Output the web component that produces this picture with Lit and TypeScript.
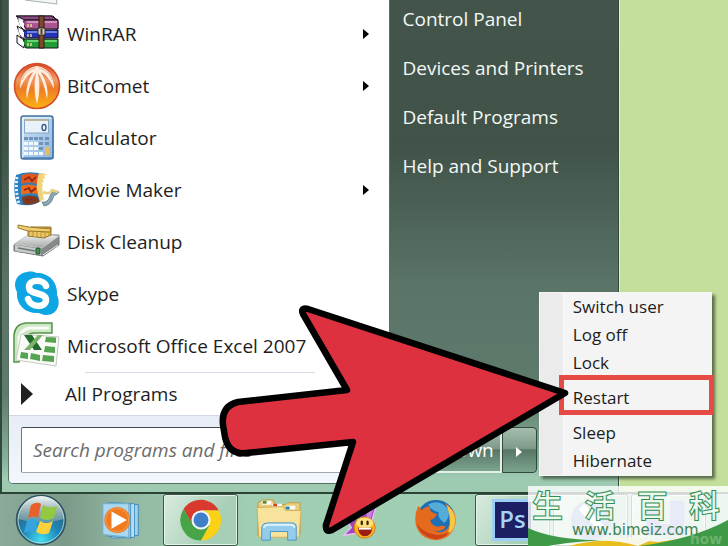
import { LitElement, html, css, svg, nothing, TemplateResult } from "lit";
import { customElement } from "lit/decorators.js";

type Icon = TemplateResult;

const frame = (body: unknown): Icon =>
  html`<svg class="icon" viewBox="0 0 48 48" aria-hidden="true">${body}</svg>`;

const paperIcon = frame(svg`<path d="M10 10H40L44 46L12 42Z" fill="#f4f6f6" stroke="#a3b0b0"/>`);

const winrarIcon = frame(svg`
  <g stroke="#1b1420" stroke-width="1">
    <path d="M4 6H40L45 11V19L40 21H12L8 17Z" fill="#e9e4ec"/>
    <path d="M3 6L38 6L45 10H12Z" fill="#8b4a80"/>
    <path d="M11 10H45V19H13Q9 15 11 10Z" fill="#a9558f"/>
    <path d="M4 16L11 20V29L8 27Z" fill="#e9eaf4"/>
    <path d="M11 20H45V28H13Q9 24 11 20Z" fill="#2434b4"/>
    <path d="M4 25L11 30V38L4 33Z" fill="#eef2ee"/>
    <path d="M11 29H45V38H13Q9 34 11 29Z" fill="#1f9c35"/>
  </g>
  <path d="M5 9L11 13V18L7 16ZM5 19L11 22V27L7 25ZM5 28L11 32V36L7 34Z" fill="#fff"/>
  <path d="M14 12H44" stroke="#d592bd" stroke-width="2"/>
  <path d="M14 22H44" stroke="#6d83e8" stroke-width="2"/>
  <path d="M14 31H44" stroke="#68d770" stroke-width="2"/>
  <path d="M15 14v3M18 14v3M15 24v3M18 24v3M15 33v3M18 33v3" stroke="#f0dfa0" stroke-width="1.4"/>
  <path d="M26 6H31V38H26Z" fill="#7a4a2a" stroke="#2e1a10"/>
  <rect x="25" y="18" width="7" height="7" rx="1" fill="#d9d3c4" stroke="#2a2420"/>
  <path d="M28.500 19V24" stroke="#463c34" stroke-width="2"/>`);

const bitcometIcon = frame(svg`
  <defs><linearGradient id="bc" x1="0" y1="0" x2="0" y2="1">
    <stop offset="0" stop-color="#d9431f"/><stop offset=".35" stop-color="#f09a6a"/><stop offset=".55" stop-color="#ee7a25"/><stop offset="1" stop-color="#fbb413"/>
  </linearGradient></defs>
  <circle cx="24" cy="24" r="22.5" fill="url(#bc)" stroke="#d3502a" stroke-width="1.6"/>
  <path d="M24 4C12 6 7 15 7 27C10 20 13 14 20 10C15 19 12 28 14 37C16 27 18 18 23 11C21 21 21 31 24 42C27 31 27 21 25 11C30 18 32 27 34 37C36 28 33 19 28 10C35 14 38 20 41 27C41 15 36 6 24 4Z" fill="#fff6ea" opacity=".93"/>
  <path d="M22 6C15 8 12 11 9 18M26 6C33 8 36 11 39 18" stroke="#f3b28a" fill="none"/>`);

const calculatorIcon = frame(svg`
  <defs><linearGradient id="ca" x1="0" y1="0" x2="1" y2="1">
    <stop offset="0" stop-color="#cfe4f7"/><stop offset="1" stop-color="#8fb6de"/>
  </linearGradient></defs>
  <rect x="8" y="2" width="32" height="43" rx="2.5" fill="url(#ca)" stroke="#44729f" stroke-width="1.4"/>
  <path d="M10 44V4H38" stroke="#eef7ff" stroke-width="1.2" fill="none"/>
  <path d="M40 5V44H10" stroke="#477db5" stroke-width="1.4" fill="none"/>
  <rect x="11.500" y="6" width="24" height="13" fill="#e9f2f9" stroke="#85a7c5"/>
  <path d="M11 6H36" stroke="#c3a160"/>
  <ellipse cx="31" cy="13.500" rx="2" ry="3" fill="none" stroke="#355b8a" stroke-width="1.4"/>
  <g fill="#6f94b8">
    <path d="M11 23h4v3h-4zM16 23h4v3h-4zM21 23h4v3h-4zM26 23h4v3h-4zM32 23h4v3h-4z"/>
    <path d="M26 28h4v3h-4zM32 28h4v3h-4zM26 33h4v3h-4z"/>
  </g>
  <g fill="#f4f9fd">
    <path d="M11 28h4v3h-4zM16 28h4v3h-4zM21 28h4v3h-4zM11 33h4v3h-4zM16 33h4v3h-4zM21 33h4v3h-4zM11 38h4v3h-4zM16 38h4v3h-4zM21 38h4v3h-4zM26 38h4v3h-4z"/>
  </g>
  <path d="M32 33h4v8h-4z" fill="#e8bb62"/>`);

const movieIcon = frame(svg`
  <path d="M3 9Q14 4 31 8Q24 18 29 34Q20 42 4 38Q-1 24 3 9Z" fill="#2c7fbf"/>
  <path d="M4 11Q2 24 6 38" stroke="#dff0fb" stroke-width="3" stroke-dasharray="2.200 1.800" fill="none"/>
  <path d="M9 9Q17 6 26 9L24 18Q16 15 8 18Z" fill="#e4581e"/>
  <path d="M8 20Q16 17 24 20L24 28Q16 26 8 29Z" fill="#ec6a1c"/>
  <path d="M9 31Q17 28 25 31L26 36Q17 40 10 38Z" fill="#7c3b22"/>
  <path d="M11 14L16 11L19 15L23 11M11 24L16 22L18 26L23 22M13 34L20 33" stroke="#8f2412" stroke-width="1.700" fill="none"/>
  <path d="M26 7L34 8Q27 18 31 33L27 36Q21 20 26 7Z" fill="#f3d27a"/>
  <path d="M33 9Q27 20 33 34" stroke="#fff" stroke-width="2" stroke-dasharray="2.200 1.800" fill="none"/>
  <path d="M29 36Q35 37 37 30Q39 23 46 26L43 29Q41 28 40 32Q38 39 31 40Z" fill="#8ba7b4" stroke="#52717e" stroke-width=".7"/>
  <path d="M30 26Q37 29 39 24L45 26" stroke="#e9cf80" stroke-width="2.500" fill="none"/>`);

const diskIcon = frame(svg`
  <defs><linearGradient id="dk" x1="0" y1="0" x2="0" y2="1">
    <stop offset="0" stop-color="#f4f4f4"/><stop offset="1" stop-color="#a2a5a6"/>
  </linearGradient></defs>
  <path d="M1 27L16 17H46V27L30 38L1 33Z" fill="#85898a" stroke="#717576"/>
  <path d="M1 26L17 16L46 18L29 30Z" fill="url(#dk)" stroke="#c5c7c8"/>
  <path d="M2 27L28 31V37L2 33Z" fill="#c7caca"/>
  <path d="M5 30L22 33" stroke="#6f7374" stroke-width="1.500"/>
  <rect x="23" y="30" width="4" height="6" rx="1" fill="#399648" stroke="#22482a"/>
  <path d="M30 37L45 27" stroke="#eee" stroke-width="1"/>
  <path d="M15 13L18 9H38V17L31 20L15 18Z" fill="#d7ad43" stroke="#95742a"/>
  <path d="M5 7L16 9L38 11L37 14L15 13L5 10Z" fill="#efce70" stroke="#9d7a2c"/>
  <path d="M18 14V18M22 14V19M26 14V19M30 15V19M34 15V18" stroke="#f5dda0"/>`);

const skypeIcon = frame(svg`
  <path d="M14 2C19 1 21 2 24 3C36 3 45 12 44 25C48 33 45 45 33 45C29 45 28 43 24 43C11 43 3 34 4 22C-1 13 4 3 14 2Z" fill="#0ea5e3"/>
  <path d="M33 16C31 9 16 9 16 17C16 26 33 21 33 30C33 38 18 38 15 29" fill="none" stroke="#fff" stroke-width="6.500" stroke-linecap="round"/>`);

const excelIcon = frame(svg`
  <path d="M1 40V13Q2 2 13 1H39V11H20Q12 12 11 21L6 40Z" fill="#cde6c3" stroke="#539548" stroke-width="1.500"/>
  <path d="M6 37V16Q8 7 17 6H36" stroke="#f7fcf5" stroke-width="3" fill="none"/>
  <path d="M8 12L46 15L43 44L3 38Z" fill="#fafbf8" stroke="#c3ccbf"/>
  <path d="M33 15L43 15.500V21L32 20ZM32 24L42 25V31L31 30ZM30 33L41 34V40L29 39ZM18 31L27 33V39L17 37ZM8 30L15 31V37L7 36Z" fill="#55a550"/>
  <path d="M11 13H19L29 28H21Z" fill="#226c2d"/>
  <path d="M25 13H30L17 28H11Z" fill="#7eb26c"/>`);

const orbIcon = html`<svg class="orb" viewBox="0 0 52 52" aria-hidden="true">
  <defs>
    <radialGradient id="or" cx=".5" cy=".9" r=".75">
      <stop offset="0" stop-color="#43dcef"/><stop offset=".5" stop-color="#1c87b8"/><stop offset="1" stop-color="#2d5f78"/>
    </radialGradient>
    <linearGradient id="gl" x1="0" y1="0" x2="0" y2="1">
      <stop offset="0" stop-color="#f5faf7"/><stop offset="1" stop-color="#8fa8a6" stop-opacity=".55"/>
    </linearGradient>
  </defs>
  <circle cx="26" cy="26" r="24.500" fill="url(#or)" stroke="#33525a" stroke-width="1.500"/>
  <path d="M3 25A23 23 0 0 1 49 25Q26 32 3 25Z" fill="url(#gl)"/>
  <path d="M16 11Q22 7 26 10L23 24Q19 21 13 24Z" fill="#e9602c"/>
  <path d="M28 11Q34 15 42 12L39 24Q32 28 25 24Z" fill="#93c843"/>
  <path d="M12 27Q18 23 23 27L20 39Q15 36 9 39Z" fill="#38a4df"/>
  <path d="M25 27Q31 31 38 27L34 39Q28 42 21 38Z" fill="#fbd13d"/>
  <circle cx="26" cy="26" r="23" fill="none" stroke="#d4eeee" stroke-opacity=".7"/>
</svg>`;

const mediaIcon = frame(svg`
  <path d="M16 7L40 8V40L16 42Z" fill="#9ed2ef" stroke="#4286b4"/>
  <path d="M12 6L36 7V42L12 43Z" fill="#b3def5" stroke="#4a90bd"/>
  <path d="M8 6L32 7V43L8 41Z" fill="#8ec8e8" stroke="#4a90bd"/>
  <path d="M3 7H30V42L3 39Z" fill="#a9d8f0" stroke="#75aecc"/>
  <circle cx="18" cy="24" r="13.500" fill="#f07a1f"/>
  <circle cx="18" cy="24" r="12" fill="none" stroke="#fa9f4a"/>
  <path d="M12 15L28 24L12 33Z" fill="#fff"/>`);

const chromeIcon = frame(svg`
  <path d="M24 14H42.500A21.500 21.500 0 0 0 5.800 12.500L15 29L24 24Z" fill="#d93a2e"/>
  <path d="M24 14H42.500A21.500 21.500 0 0 1 24 45.500L33 28Z" fill="#fbd116"/>
  <path d="M5.800 12.500L15.500 29L24 33L33 29L24 45.500A21.500 21.500 0 0 1 5.800 12.500Z" fill="#47a548"/>
  <circle cx="24" cy="24" r="10" fill="#f3f6f8"/>
  <circle cx="24" cy="24" r="7.800" fill="#3f7fc8"/>`);

const folderIcon = frame(svg`
  <path d="M2 6L7 3H18L20 8H31L33 6H46V38L2 40Z" fill="#e9cd78" stroke="#bf9b4a"/>
  <path d="M6 4H16V8H6ZM17 7H27V11H17ZM31 9H41V13H31Z" fill="#fbfbf6"/>
  <path d="M7 4h4v3h-4z" fill="#5a8a2c"/><path d="M18 7h4v3h-4z" fill="#d4451f"/><path d="M31 10h4v3h-4z" fill="#267fa8"/>
  <path d="M1 11L28 10L31 14H47L45 42H3Z" fill="#f7e39c" stroke="#d2ae5b"/>
  <path d="M6 45V31Q7 27 12 27H37Q42 27 42 31V45H33V36H15V45Z" fill="#94cdec" stroke="#4b93c2"/>
  <path d="M8 32Q9 29 13 29H36Q40 29 40 32" stroke="#dff3fd" stroke-width="2" fill="none"/>`);

const messengerIcon = frame(svg`
  <path d="M8 14L18 12L26 27L34 6L46 3L36 36L10 40L18 32Z" fill="#a145c0" stroke="#e6bdf0" stroke-width="1.500"/>
  <path d="M37 8L43 6L36 30H31Z" fill="#c681dc"/>
  <circle cx="32" cy="32" r="11" fill="#f9b422" stroke="#d77c12"/>
  <ellipse cx="32" cy="27" rx="9" ry="5.500" fill="#fde178"/>
  <path d="M25 32H40Q39 41 32 41Q26 41 25 32Z" fill="#9c1d15"/>
  <path d="M26 32H39V34H26Z" fill="#fff"/>
  <ellipse cx="29" cy="27" rx="1.300" ry="2.500" fill="#3b230a"/><ellipse cx="35" cy="27" rx="1.300" ry="2.500" fill="#3b230a"/>`);

const firefoxIcon = frame(svg`
  <circle cx="25" cy="23" r="20" fill="#1f6fb4"/>
  <path d="M17 8Q29 1 38 13Q40 21 34 27Q26 22 28 16Q20 14 17 8Z" fill="#54acd9"/>
  <path d="M34 6Q48 15 45 29Q41 44 25 45Q8 44 4 29Q2 17 7 9L10 14Q14 9 19 10Q18 14 21 16L26 18Q25 22 19 24Q20 30 27 31Q33 29 35 31Q31 37 23 35Q33 40 39 30Q43 18 34 6Z" fill="#e66a1e"/>
  <path d="M36 8Q48 17 44 31Q41 38 36 40Q43 27 36 8Z" fill="#f9c740"/>
  <path d="M5 28Q9 42 26 44Q36 42 40 36Q32 41 23 39Q11 37 5 28Z" fill="#c94417"/>`);

const photoshopIcon = html`<span class="ps">Ps</span>`;

const blueDiscIcon = frame(svg`
  <circle cx="24" cy="24" r="21" fill="#8aa0d0"/>
  <path d="M14 10L36 34" stroke="#fff" stroke-width="8"/>`);

const blocksIcon = frame(svg`
  <path d="M0 12H15V28H25V4H40V40H0Z" fill="#8a94d8"/>`);

const programs: { name: string; icon: Icon; more?: boolean }[] = [
  { name: "", icon: paperIcon },
  { name: "WinRAR", icon: winrarIcon, more: true },
  { name: "BitComet", icon: bitcometIcon, more: true },
  { name: "Calculator", icon: calculatorIcon },
  { name: "Movie Maker", icon: movieIcon, more: true },
  { name: "Disk Cleanup", icon: diskIcon },
  { name: "Skype", icon: skypeIcon },
  { name: "Microsoft Office Excel 2007", icon: excelIcon },
];

const places = ["Control Panel", "Devices and Printers", "Default Programs", "Help and Support"];

const tasks: { label: string; icon: Icon; open?: boolean }[] = [
  { label: "Windows Media Player", icon: mediaIcon },
  { label: "Chrome", icon: chromeIcon, open: true },
  { label: "Explorer", icon: folderIcon },
  { label: "Messenger", icon: messengerIcon },
  { label: "Firefox", icon: firefoxIcon },
  { label: "Photoshop", icon: photoshopIcon, open: true },
  { label: "Browser", icon: blueDiscIcon, open: true },
  { label: "Files", icon: blocksIcon, open: true },
];

const pointer = html`<svg class="pointer" viewBox="216 300 354 240" aria-hidden="true">
  <path d="M565 393L308 309Q300 307 303 314L347 390L238 402Q221 406 223 425L225 437Q229 455 246 453L353 442L326 525Q325 533 332 530Z"
    fill="#de3140" stroke="#000" stroke-width="6.500" stroke-linejoin="round"/>
</svg>`;

@customElement("power-menu")
export class PowerMenu extends LitElement {
  static styles = css`
    :host { display: block; }
    .menu {
      box-sizing: border-box;
      width: 173px;
      margin: 0;
      padding: 0;
      list-style: none;
      background: linear-gradient(90deg, #ebebeb 22px, #dcdcdc 22px, #fff 23px, #f4f4f4 24px);
      border: 1px solid #f6f6f6;
      box-shadow: 3px 3px 3px rgba(30, 50, 30, 0.65);
      font-size: 17px;
    }
    .entry { position: relative; }
    .marked { margin: 7px 0; }
    .choice {
      display: block;
      width: 100%;
      padding: 0 0 0 33px;
      border: 0;
      background: none;
      color: #1c1c1c;
      font: inherit;
      line-height: 28px;
      text-align: left;
    }
    .ring {
      position: absolute;
      inset: -9px -3px -3px 19px;
      border: 5px solid #e64a44;
    }
    .pointer {
      position: absolute;
      z-index: 2;
      width: 354px;
      height: 240px;
      right: 141px;
      top: -84px;
      pointer-events: none;
    }
  `;

  render() {
    return html`<ul class="menu">
      ${["Switch user", "Log off", "Lock", "Restart", "Sleep", "Hibernate"].map((name) => {
        const marked = name === "Restart";
        return html`<li class="entry ${marked ? "marked" : ""}">
          <button class="choice">${name}</button>
          ${marked ? html`<span class="ring"></span>${pointer}` : nothing}
        </li>`;
      })}
    </ul>`;
  }
}

@customElement("start-menu")
export class StartMenu extends LitElement {
  static styles = css`
    :host {
      position: relative;
      z-index: 2;
      box-sizing: border-box;
      display: grid;
      grid-template-columns: minmax(0, 382fr) minmax(0, 227fr);
      width: 85%;
      padding-left: 6px;
      border: solid #2f4a3c;
      border-width: 0 1px 0 2px;
      background: linear-gradient(#43554b 0, #415349 30%, #5a7467 58%, #5f7b6c 80%, #86ae98 93%, #9dcab0 97%, #9dcab0 100%);
      box-shadow: 1px 0 #e2f2c4;
    }
    .left {
      display: flex;
      flex-direction: column;
      justify-content: flex-end;
      min-height: 0;
      margin-bottom: 8px;
      overflow: hidden;
      background: #fff;
      border: solid #567263;
      border-width: 0 1px 1px;
      border-radius: 0 0 5px 5px;
    }
    .programs { flex: none; margin: 0; padding: 0; list-style: none; }
    .program, .all {
      display: flex;
      flex: none;
      align-items: center;
      width: 100%;
      border: 0;
      background: none;
      color: #1e1e1e;
      font: inherit;
      text-align: left;
    }
    .program { gap: 6px; height: 52px; padding: 0 20px 0 4px; }
    .name { flex: 1; }
    .icon { flex: none; width: 48px; height: 48px; }
    .more { width: 6px; height: 10px; }
    .rule { flex: none; margin: 0 74px 0 76px; border: 0; border-top: 1px solid #d5dbe4; }
    .all { gap: 32px; height: 42px; padding: 0 12px; }
    .forward { width: 12px; height: 22px; }
    .search {
      flex: none;
      padding: 11px 12px 10px;
      border-top: 1px solid #d0d7e4;
      background: linear-gradient(#e7ecf6, #f3f6fd);
    }
    .box {
      display: block;
      box-sizing: border-box;
      width: 100%;
      height: 46px;
      padding: 0 11px;
      border: 1px solid #a0a8ae;
      border-top-color: #444b50;
      border-left-color: #6f777c;
      border-radius: 2px;
      background: #fff;
      font: inherit;
      font-style: italic;
    }
    .box::placeholder { color: #6b6b6b; opacity: 1; }
    .right { display: flex; flex-direction: column; justify-content: space-between; }
    .places {
      display: grid;
      gap: 24px;
      margin: 0;
      padding: 7px 12px;
      list-style: none;
      line-height: 25px;
    }
    .place { color: #f4f8f5; text-decoration: none; }
    .power { display: flex; justify-content: flex-end; margin: 0 81px 19px 0; }
    .shut, .options {
      height: 46px;
      border: 1px solid #2f4a3c;
      background: linear-gradient(#a4bdae 0, #7f9b8b 46%, #587667 50%, #7ba48d 100%);
      color: #fff;
      font: inherit;
    }
    .shut {
      flex: none;
      padding: 0 6px;
      border-color: #e4efe8;
      border-width: 2px;
      border-radius: 3px 0 0 3px;
    }
    .options { width: 35px; flex: none; padding: 0; border-radius: 0 4px 4px 0; }
    .anchor { position: relative; align-self: flex-end; }
    .popup { position: absolute; left: 100%; bottom: -3px; margin-left: 2px; }
  `;

  render() {
    return html`
      <div class="left">
        <ul class="programs">
          ${programs.map(
            (p) => html`<li>
              <button class="program">
                ${p.icon}<span class="name">${p.name}</span>
                ${p.more ? html`<svg class="more" viewBox="0 0 6 10" aria-hidden="true"><path d="M0 0L6 5L0 10Z"/></svg>` : nothing}
              </button>
            </li>`
          )}
        </ul>
        <hr class="rule" />
        <button class="all">
          <svg class="forward" viewBox="0 0 12 22" aria-hidden="true"><path d="M0 0L12 11L0 22Z" fill="#222"/></svg>
          All Programs
        </button>
        <div class="search">
          <input class="box" type="search" aria-label="Search programs and files" placeholder="Search programs and files" />
        </div>
      </div>
      <nav class="right">
        <ul class="places">
          ${places.map((p) => html`<li><a class="place" href="#">${p}</a></li>`)}
        </ul>
        <div class="power">
          <button class="shut">Shut down</button>
          <div class="anchor">
            <button class="options" aria-label="Power options">
              <svg class="more" viewBox="0 0 6 10" aria-hidden="true"><path d="M0 0L6 5L0 10Z" fill="#fff"/></svg>
            </button>
            <power-menu class="popup"></power-menu>
          </div>
        </div>
      </nav>
    `;
  }
}

@customElement("task-bar")
export class TaskBar extends LitElement {
  static styles = css`
    :host {
      display: flex;
      gap: 3px;
      box-sizing: border-box;
      height: 54px;
      overflow: hidden;
      border-top: 2px solid #2c4337;
      background: linear-gradient(90deg, #8caa99 0, #7c9a89 9%, #93b9a2 18%, #9fceb2 34%, #a4d0b4 100%);
    }
    .start, .task {
      display: grid;
      place-items: center;
      flex: none;
      padding: 0;
      border: 0;
      background: none;
    }
    .start { width: 82px; }
    .orb { width: 52px; height: 52px; }
    .task { width: 75px; }
    .open {
      border: 1px solid #3d5848;
      border-radius: 3px;
      box-shadow: inset 0 0 0 1px #e3f3e8;
      background: linear-gradient(120deg, #d9ebdf, #a6cfb5 70%);
    }
    .icon { width: 46px; height: 46px; }
    .ps {
      box-sizing: border-box;
      width: 42px;
      height: 42px;
      border: 3px solid #9ccdf5;
      background: #1c1f63;
      color: #a3d4fa;
      font: 600 24px/34px "Open Sans", sans-serif;
    }
  `;

  render() {
    return html`
      <button class="start" aria-label="Start">${orbIcon}</button>
      ${tasks.map((t) => html`<button class="task ${t.open ? "open" : ""}" aria-label=${t.label}>${t.icon}</button>`)}
    `;
  }
}

@customElement("site-badge")
export class SiteBadge extends LitElement {
  static styles = css`
    :host {
      display: flex;
      flex-direction: column;
      box-sizing: border-box;
      width: 200px;
      height: 60px;
      overflow: hidden;
      background: rgba(255, 255, 255, 0.8);
    }
    .waves { position: absolute; left: 0; bottom: 0; width: 200px; height: 60px; }
    .title {
      position: relative;
      display: flex;
      justify-content: space-between;
      padding: 0 8px 0 4px;
      color: #eef6f0;
      font: 700 31px/36px "Noto Sans CJK SC", sans-serif;
      -webkit-text-stroke: 1px #2f9150;
    }
    .site {
      position: relative;
      padding-left: 44px;
      color: #3f8350;
      font: 15px/16px "DejaVu Sans", sans-serif;
    }
    .faint {
      position: absolute;
      right: 6px;
      bottom: 0;
      color: rgba(160, 205, 150, 0.5);
      font: 700 15px/16px "Open Sans", sans-serif;
    }
  `;

  render() {
    return html`
      <svg class="waves" viewBox="0 0 200 60" aria-hidden="true">
        <path d="M40 60Q80 50 130 56Q160 52 200 44V60Z" fill="#e9bd1e"/>
        <path d="M0 42Q28 55 78 54Q40 56 20 60H0Z" fill="#3f9a48"/>
        <path d="M66 55Q100 49 126 53L110 60Q90 54 66 55Z" fill="#f5f7e8"/>
        <path d="M112 60Q165 53 200 34V60Z" fill="#3f9a48"/>
      </svg>
      <div class="title">${[..."生活百科"].map((c) => html`<span>${c}</span>`)}</div>
      <span class="faint">how</span>
      <div class="site">www.bimeiz.com</div>
    `;
  }
}

@customElement("app-root")
export class AppRoot extends LitElement {
  static styles = css`
    :host {
      position: relative;
      display: grid;
      grid-template-rows: minmax(0, 1fr) auto;
      height: 100vh;
      overflow: hidden;
      background: #c4df9b;
      font: 19px/24px "Open Sans", "Noto Sans", sans-serif;
    }
    .badge { position: absolute; z-index: 3; right: 0; bottom: 0; }
  `;

  render() {
    return html`
      <start-menu></start-menu>
      <task-bar></task-bar>
      <site-badge class="badge"></site-badge>
    `;
  }
}
